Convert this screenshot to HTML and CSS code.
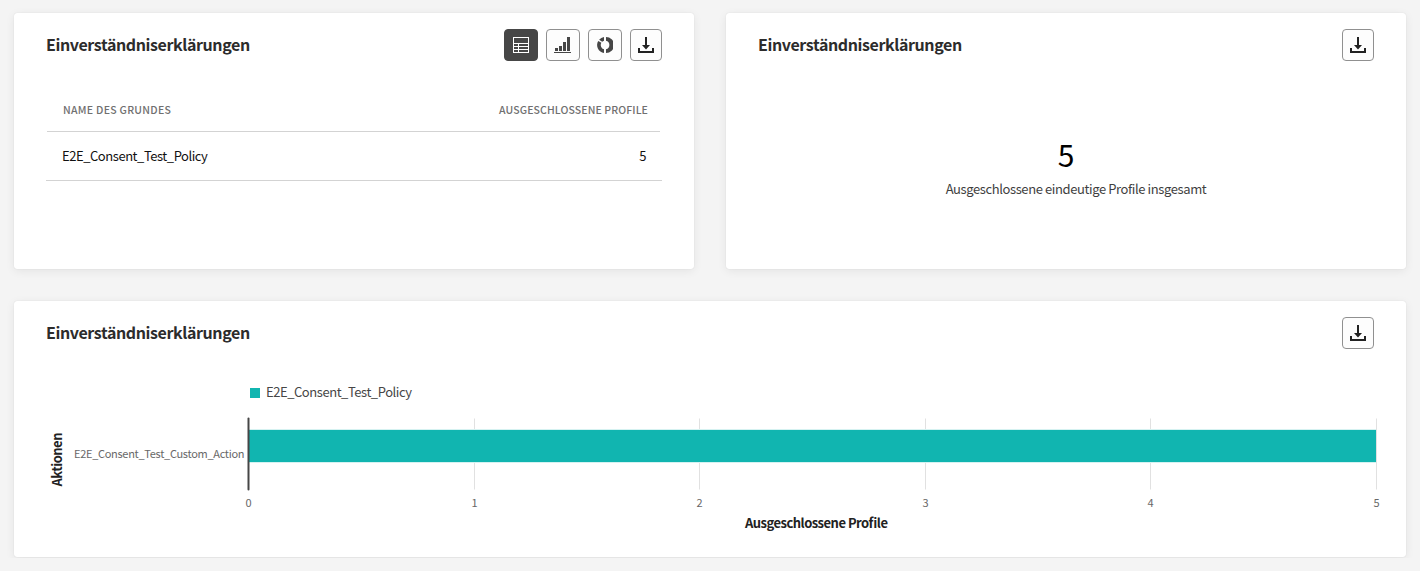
FILE: index.html
```html
<!DOCTYPE html>
<html lang="de">
<head>
<meta charset="utf-8">
<title>Einverständniserklärungen</title>
<link rel="stylesheet" href="styles.css">
</head>
<body>
<svg class="defs" aria-hidden="true">
  <symbol id="download" viewBox="0 0 16 16">
    <path d="M7 0h2v8h3L8 12.5 4 8h3z"/>
    <path d="M0 11h2v3h12v-3h2v5H0z"/>
  </symbol>
</svg>
<main class="dashboard">
  <section class="card">
    <header class="card-header">
      <h2 class="title">Einverständniserklärungen</h2>
      <div class="actions">
        <button class="btn wide selected" aria-label="Tabelle"><svg class="icon" viewBox="0 0 16 16"><path fill-rule="evenodd" d="M0 0h16v16H0zM1 1v5h14V1zM1 7v2h4V7zM6 7v2h9V7zM1 10v2h4v-2zM6 10v2h9v-2zM1 13v2h4v-2zM6 13v2h9v-2z"/></svg></button>
        <button class="btn wide" aria-label="Balkendiagramm"><svg class="icon bars" viewBox="0 0 18 16"><path d="M1 11h3v3H1zM5 9h3v5H5zM9 5h3v9H9zM13 0h3v14h-3zM0 15h17v1H0z"/></svg></button>
        <button class="btn wide" aria-label="Ringdiagramm"><svg class="icon" viewBox="0 0 16 16"><path d="M9 0a8 8 0 0 1 0 16v-3.8a4.3 4.3 0 0 0 0-8.4zM7 16A8 8 0 0 1 1.2 4l3.2 1.8A4.3 4.3 0 0 0 7 12.2zM7 0v3.8a4.3 4.3 0 0 0-1.8 1L2.1 2.7A8 8 0 0 1 7 0z"/></svg></button>
        <button class="btn" aria-label="Herunterladen"><svg class="icon dark"><use href="#download"/></svg></button>
      </div>
    </header>
    <div class="table">
      <div class="row head"><span class="th-name">Name des Grundes</span><span class="th-count">Ausgeschlossene Profile</span></div>
      <div class="row body"><span class="td-name">E2E_Consent_Test_Policy</span><span>5</span></div>
    </div>
  </section>
  <section class="card">
    <header class="card-header">
      <h2 class="title">Einverständniserklärungen</h2>
      <button class="btn" aria-label="Herunterladen"><svg class="icon dark"><use href="#download"/></svg></button>
    </header>
    <div class="metric">
      <span class="metric-value">5</span>
      <span class="metric-label">Ausgeschlossene eindeutige Profile insgesamt</span>
    </div>
  </section>
  <section class="card full">
    <header class="card-header">
      <h2 class="title">Einverständniserklärungen</h2>
      <button class="btn" aria-label="Herunterladen"><svg class="icon dark"><use href="#download"/></svg></button>
    </header>
    <svg class="chart" viewBox="0 0 1344 168">
      <rect class="series" x="204" y="14" width="10" height="10"/>
      <text class="legend" x="220" y="23" textLength="146">E2E_Consent_Test_Policy</text>
      <path class="grid" d="M428.5 44.5v71M653.5 44.5v71M879.5 44.5v71M1104.5 44.5v71M1330.5 44.5v71"/>
      <rect class="halo" x="203" y="55" width="1127" height="34"/>
      <rect class="series" x="203" y="56" width="1127" height="32"/>
      <path class="axis" d="M202.5 44.5v71"/>
      <text class="axis-title" transform="translate(16 112.5) rotate(-90)" textLength="54">Aktionen</text>
      <text class="tick" x="28" y="84" textLength="170.5">E2E_Consent_Test_Custom_Action</text>
      <g class="tick number">
        <text x="202.5" y="133">0</text><text x="428.5" y="133">1</text><text x="653.5" y="133">2</text>
        <text x="879.5" y="133">3</text><text x="1104.5" y="133">4</text><text x="1330.5" y="133">5</text>
      </g>
      <text class="axis-title" x="699" y="153.5" textLength="143">Ausgeschlossene Profile</text>
    </svg>
  </section>
</main>
</body>
</html>
```
FILE: styles.css
```css
* { box-sizing: border-box; }
body {
  margin: 0;
  background: #f4f4f4;
  color: #2c2c2c;
  font-family: "Noto Sans CJK SC", "Open Sans", sans-serif;
  overflow: hidden;
}
.defs { display: none; }
.dashboard {
  display: grid;
  grid-template-columns: 680px 680px;
  grid-template-rows: 256px 256px;
  gap: 32px;
  padding: 13px 14px;
}
.card {
  background: #fff;
  border-radius: 3px;
  padding: 16px 32px 0;
  box-shadow: 0 0 1px rgba(0, 0, 0, .16), 0 2px 10px rgba(0, 0, 0, .07);
}
.full {
  grid-column: 1 / -1;
  clip-path: inset(-14px -14px -1px);
}
.card-header {
  display: flex;
  justify-content: space-between;
  align-items: center;
  height: 32px;
}
.title {
  margin: 0;
  padding-bottom: 2px;
  font-size: 16px;
  line-height: 24px;
  font-weight: 700;
  letter-spacing: -.4px;
}
.actions { display: flex; gap: 8px; }
.btn {
  display: flex;
  align-items: center;
  justify-content: center;
  width: 32px;
  height: 32px;
  padding: 0;
  border: 1px solid #909090;
  border-radius: 4px;
  background: #fdfdfd;
  color: #464646;
}
.wide { width: 34px; }
.selected { background: #464646; border-color: #464646; color: #fff; }
.icon { width: 16px; height: 16px; fill: currentColor; }
.bars { width: 18px; }
.dark { color: #222; }
.table { margin-top: 28px; }
.row {
  display: flex;
  justify-content: space-between;
  align-items: center;
  border-bottom: 1px solid #d3d3d3;
}
.head {
  height: 43px;
  margin: 0 2px 0 1px;
  padding: 0 12px 1px 16px;
  font-size: 10.5px;
  font-weight: 500;
  text-transform: uppercase;
  color: #707070;
}
.th-name { letter-spacing: .28px; }
.th-count { letter-spacing: .1px; }
.body {
  height: 49px;
  padding: 0 16px 1px;
  font-size: 13px;
  letter-spacing: -.45px;
  color: #111;
}
.metric {
  display: flex;
  flex-direction: column;
  align-items: center;
  padding-top: 70px;
}
.metric-value {
  font-size: 30px;
  font-weight: 400;
  line-height: 46px;
  color: #000;
}
.metric-label {
  margin: 2px 0 0 20px;
  font-size: 13px;
  line-height: 20px;
  letter-spacing: -.4px;
  color: #3f3f3f;
}
.chart { display: block; width: 1344px; height: 168px; margin-top: 25px; }
.series { fill: #11b5b0; }
.halo { fill: #d5f2f1; }
.grid { stroke: #e1e1e1; fill: none; }
.axis { stroke: #464646; stroke-width: 2; stroke-linecap: round; }
.legend { font-size: 13px; fill: #464646; }
.axis-title { font-size: 13px; font-weight: 700; fill: #222; }
.tick { font-size: 11px; fill: #686868; }
.number { text-anchor: middle; }
```
